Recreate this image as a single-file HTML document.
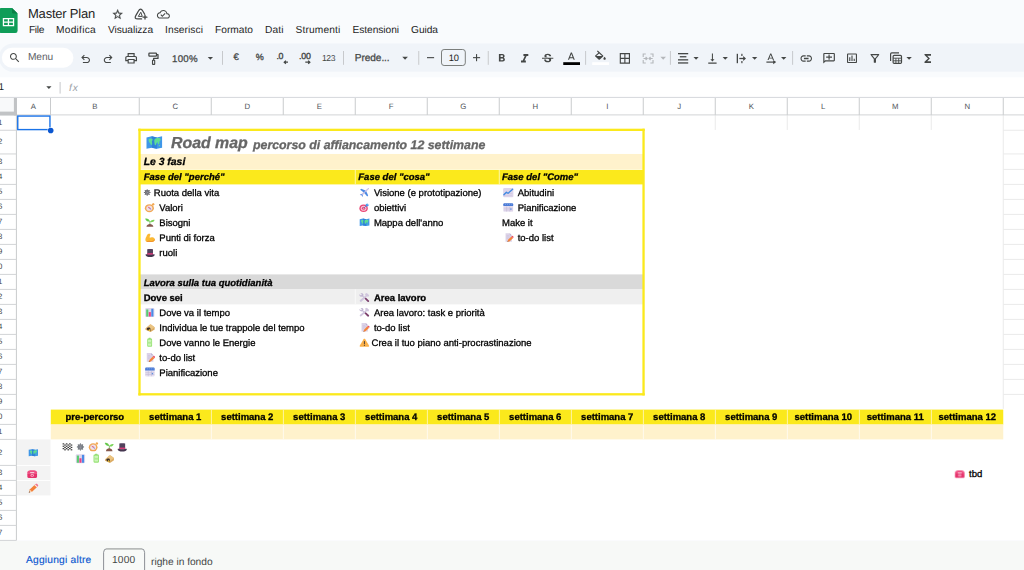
<!DOCTYPE html>
<html lang="it"><head><meta charset="utf-8"><title>Master Plan</title>
<style>
html,body{margin:0;padding:0}
body{width:1024px;height:570px;overflow:hidden;position:relative;background:#f9fbfd;font-family:"Liberation Sans", sans-serif;}
.t{position:absolute;white-space:pre;line-height:1;text-rendering:geometricPrecision;}
.c{-webkit-text-stroke:0.3px currentColor;}
svg{position:absolute;left:0;top:0;overflow:visible}
</style></head><body>
<svg id="grid" width="1024" height="570" viewBox="0 0 1024 570">
<rect x="-1" y="43.4" width="1100" height="28.4" rx="14.2" fill="#f0f4f9"/>
<rect x="1.9" y="47.8" width="71.5" height="19.9" rx="9.95" fill="#ffffff"/>
<rect x="0" y="77.3" width="1024" height="21" fill="#ffffff"/>
<rect x="441.5" y="49.5" width="23.8" height="16" rx="2.6" fill="none" stroke="#747775" stroke-width="0.95"/>
<rect x="0.00" y="98.00" width="1024.00" height="442.40" fill="#ffffff"/>
<rect x="0.00" y="540.80" width="1024.00" height="30.20" fill="#f7f9f7"/>
<rect x="103.6" y="548.7" width="41" height="30" rx="3.6" fill="#f8faf8" stroke="#80858a" stroke-width="0.9"/>
<rect x="106.5" y="548.2" width="35.2" height="1.5" fill="#bdc0be"/>
<rect x="1003.25" y="129.75" width="20.75" height="1.00" fill="#eaeaea"/>
<rect x="1003.25" y="153.45" width="20.75" height="1.00" fill="#eaeaea"/>
<rect x="1003.25" y="168.90" width="20.75" height="1.00" fill="#eaeaea"/>
<rect x="1003.25" y="183.90" width="20.75" height="1.00" fill="#eaeaea"/>
<rect x="1003.25" y="198.90" width="20.75" height="1.00" fill="#eaeaea"/>
<rect x="1003.25" y="213.90" width="20.75" height="1.00" fill="#eaeaea"/>
<rect x="1003.25" y="228.90" width="20.75" height="1.00" fill="#eaeaea"/>
<rect x="1003.25" y="243.90" width="20.75" height="1.00" fill="#eaeaea"/>
<rect x="1003.25" y="258.90" width="20.75" height="1.00" fill="#eaeaea"/>
<rect x="1003.25" y="273.90" width="20.75" height="1.00" fill="#eaeaea"/>
<rect x="1003.25" y="288.90" width="20.75" height="1.00" fill="#eaeaea"/>
<rect x="1003.25" y="303.90" width="20.75" height="1.00" fill="#eaeaea"/>
<rect x="1003.25" y="318.90" width="20.75" height="1.00" fill="#eaeaea"/>
<rect x="1003.25" y="333.90" width="20.75" height="1.00" fill="#eaeaea"/>
<rect x="1003.25" y="348.90" width="20.75" height="1.00" fill="#eaeaea"/>
<rect x="1003.25" y="363.90" width="20.75" height="1.00" fill="#eaeaea"/>
<rect x="1003.25" y="378.90" width="20.75" height="1.00" fill="#eaeaea"/>
<rect x="1003.25" y="393.90" width="20.75" height="1.00" fill="#eaeaea"/>
<rect x="1002.75" y="114.90" width="1.00" height="293.90" fill="#eaeaea"/>
<rect x="714.75" y="114.90" width="1.00" height="15.05" fill="#eaeaea"/>
<rect x="786.75" y="114.90" width="1.00" height="15.05" fill="#eaeaea"/>
<rect x="858.75" y="114.90" width="1.00" height="15.05" fill="#eaeaea"/>
<rect x="930.75" y="114.90" width="1.00" height="15.05" fill="#eaeaea"/>
<rect x="0.00" y="96.90" width="1024.00" height="1.00" fill="#d5d8dc"/>
<rect x="0.00" y="114.40" width="1024.00" height="1.00" fill="#d2d4d6"/>
<rect x="50.00" y="98.00" width="1.00" height="16.90" fill="#c9cbcd"/>
<rect x="138.75" y="98.00" width="1.00" height="16.90" fill="#c9cbcd"/>
<rect x="210.75" y="98.00" width="1.00" height="16.90" fill="#c9cbcd"/>
<rect x="282.75" y="98.00" width="1.00" height="16.90" fill="#c9cbcd"/>
<rect x="354.75" y="98.00" width="1.00" height="16.90" fill="#c9cbcd"/>
<rect x="426.75" y="98.00" width="1.00" height="16.90" fill="#c9cbcd"/>
<rect x="498.75" y="98.00" width="1.00" height="16.90" fill="#c9cbcd"/>
<rect x="570.75" y="98.00" width="1.00" height="16.90" fill="#c9cbcd"/>
<rect x="642.75" y="98.00" width="1.00" height="16.90" fill="#c9cbcd"/>
<rect x="714.75" y="98.00" width="1.00" height="16.90" fill="#c9cbcd"/>
<rect x="786.75" y="98.00" width="1.00" height="16.90" fill="#c9cbcd"/>
<rect x="858.75" y="98.00" width="1.00" height="16.90" fill="#c9cbcd"/>
<rect x="930.75" y="98.00" width="1.00" height="16.90" fill="#c9cbcd"/>
<rect x="1002.75" y="98.00" width="1.00" height="16.90" fill="#c9cbcd"/>
<rect x="15.90" y="98.00" width="1.00" height="442.40" fill="#c9cbcd"/>
<rect x="0.00" y="129.75" width="16.40" height="1.00" fill="#d2d4d6"/>
<rect x="0.00" y="153.45" width="16.40" height="1.00" fill="#d2d4d6"/>
<rect x="0.00" y="168.90" width="16.40" height="1.00" fill="#d2d4d6"/>
<rect x="0.00" y="183.90" width="16.40" height="1.00" fill="#d2d4d6"/>
<rect x="0.00" y="198.90" width="16.40" height="1.00" fill="#d2d4d6"/>
<rect x="0.00" y="213.90" width="16.40" height="1.00" fill="#d2d4d6"/>
<rect x="0.00" y="228.90" width="16.40" height="1.00" fill="#d2d4d6"/>
<rect x="0.00" y="243.90" width="16.40" height="1.00" fill="#d2d4d6"/>
<rect x="0.00" y="258.90" width="16.40" height="1.00" fill="#d2d4d6"/>
<rect x="0.00" y="273.90" width="16.40" height="1.00" fill="#d2d4d6"/>
<rect x="0.00" y="288.90" width="16.40" height="1.00" fill="#d2d4d6"/>
<rect x="0.00" y="303.90" width="16.40" height="1.00" fill="#d2d4d6"/>
<rect x="0.00" y="318.90" width="16.40" height="1.00" fill="#d2d4d6"/>
<rect x="0.00" y="333.90" width="16.40" height="1.00" fill="#d2d4d6"/>
<rect x="0.00" y="348.90" width="16.40" height="1.00" fill="#d2d4d6"/>
<rect x="0.00" y="363.90" width="16.40" height="1.00" fill="#d2d4d6"/>
<rect x="0.00" y="378.90" width="16.40" height="1.00" fill="#d2d4d6"/>
<rect x="0.00" y="393.90" width="16.40" height="1.00" fill="#d2d4d6"/>
<rect x="0.00" y="408.90" width="16.40" height="1.00" fill="#d2d4d6"/>
<rect x="0.00" y="423.90" width="16.40" height="1.00" fill="#d2d4d6"/>
<rect x="0.00" y="438.90" width="16.40" height="1.00" fill="#d2d4d6"/>
<rect x="0.00" y="464.90" width="16.40" height="1.00" fill="#d2d4d6"/>
<rect x="0.00" y="479.90" width="16.40" height="1.00" fill="#d2d4d6"/>
<rect x="0.00" y="494.90" width="16.40" height="1.00" fill="#d2d4d6"/>
<rect x="0.00" y="509.90" width="16.40" height="1.00" fill="#d2d4d6"/>
<rect x="0.00" y="524.90" width="16.40" height="1.00" fill="#d2d4d6"/>
<rect x="0.00" y="539.90" width="16.40" height="1.00" fill="#d2d4d6"/>
<rect x="0.00" y="98.00" width="14.00" height="13.80" fill="#f8f9fa"/>
<rect x="13.90" y="98.00" width="3.00" height="17.40" fill="#c1c3c5"/>
<rect x="0.00" y="111.60" width="16.90" height="3.80" fill="#c1c3c5"/>
<rect x="139.25" y="153.95" width="504.00" height="15.45" fill="#fff2cc"/>
<rect x="139.25" y="169.40" width="504.00" height="15.00" fill="#fbe91c"/>
<rect x="139.25" y="274.40" width="504.00" height="15.00" fill="#d9d9d9"/>
<rect x="139.25" y="289.40" width="504.00" height="15.00" fill="#efefef"/>
<rect x="354.80" y="169.40" width="0.90" height="15.00" fill="#fff8b8"/>
<rect x="498.80" y="169.40" width="0.90" height="15.00" fill="#fff8b8"/>
<rect x="139.25" y="169.05" width="504.00" height="0.90" fill="#fffae0"/>
<rect x="354.80" y="289.40" width="0.90" height="15.00" fill="#fbfbfb"/>
<rect x="138.35" y="128.70" width="506.35" height="2.30" fill="#fbe91c"/>
<rect x="138.35" y="393.15" width="506.35" height="2.30" fill="#fbe91c"/>
<rect x="138.35" y="128.70" width="2.30" height="266.75" fill="#fbe91c"/>
<rect x="642.40" y="128.70" width="2.30" height="266.75" fill="#fbe91c"/>
<rect x="50.80" y="409.60" width="952.45" height="14.80" fill="#fbe91c"/>
<rect x="50.80" y="424.40" width="952.45" height="15.00" fill="#fff2cc"/>
<rect x="138.90" y="409.60" width="0.90" height="14.80" fill="#fef6b4"/>
<rect x="138.90" y="424.40" width="0.90" height="15.00" fill="#fffbf0"/>
<rect x="210.90" y="409.60" width="0.90" height="14.80" fill="#fef6b4"/>
<rect x="210.90" y="424.40" width="0.90" height="15.00" fill="#fffbf0"/>
<rect x="282.90" y="409.60" width="0.90" height="14.80" fill="#fef6b4"/>
<rect x="282.90" y="424.40" width="0.90" height="15.00" fill="#fffbf0"/>
<rect x="354.90" y="409.60" width="0.90" height="14.80" fill="#fef6b4"/>
<rect x="354.90" y="424.40" width="0.90" height="15.00" fill="#fffbf0"/>
<rect x="426.90" y="409.60" width="0.90" height="14.80" fill="#fef6b4"/>
<rect x="426.90" y="424.40" width="0.90" height="15.00" fill="#fffbf0"/>
<rect x="498.90" y="409.60" width="0.90" height="14.80" fill="#fef6b4"/>
<rect x="498.90" y="424.40" width="0.90" height="15.00" fill="#fffbf0"/>
<rect x="570.90" y="409.60" width="0.90" height="14.80" fill="#fef6b4"/>
<rect x="570.90" y="424.40" width="0.90" height="15.00" fill="#fffbf0"/>
<rect x="642.90" y="409.60" width="0.90" height="14.80" fill="#fef6b4"/>
<rect x="642.90" y="424.40" width="0.90" height="15.00" fill="#fffbf0"/>
<rect x="714.90" y="409.60" width="0.90" height="14.80" fill="#fef6b4"/>
<rect x="714.90" y="424.40" width="0.90" height="15.00" fill="#fffbf0"/>
<rect x="786.90" y="409.60" width="0.90" height="14.80" fill="#fef6b4"/>
<rect x="786.90" y="424.40" width="0.90" height="15.00" fill="#fffbf0"/>
<rect x="858.90" y="409.60" width="0.90" height="14.80" fill="#fef6b4"/>
<rect x="858.90" y="424.40" width="0.90" height="15.00" fill="#fffbf0"/>
<rect x="930.90" y="409.60" width="0.90" height="14.80" fill="#fef6b4"/>
<rect x="930.90" y="424.40" width="0.90" height="15.00" fill="#fffbf0"/>
<rect x="50.80" y="424.10" width="952.45" height="0.60" fill="#fdf0a0"/>
<rect x="16.90" y="439.40" width="33.60" height="56.00" fill="#f3f3f3"/>
<rect x="16.90" y="464.95" width="33.60" height="0.90" fill="#ffffff"/>
<rect x="16.90" y="479.95" width="33.60" height="0.90" fill="#ffffff"/>
<rect x="17.75" y="116.05" width="32.20" height="13.55" fill="none" stroke="#1a73e8" stroke-width="1.4"/>
<circle cx="50.70" cy="130.55" r="3.2" fill="#fff"/>
<circle cx="50.70" cy="130.55" r="2.8" fill="#0b57d0"/>
</svg>
<svg id="icons" width="1024" height="570" viewBox="0 0 1024 570">
<defs><filter id="soft" x="-5%" y="-5%" width="110%" height="110%"><feGaussianBlur stdDeviation="0.38"/></filter></defs><g filter="url(#soft)" opacity="0.92">
<g transform="translate(146.50 135.70) scale(0.7800 0.6850)"><path d="M0 2.5 L6.7 0.8 L13.3 2.5 L20 0.8 V17.5 L13.3 19.2 L6.7 17.5 L0 19.2Z" fill="#2f8ee6"/><path d="M6.7 0.8 L13.3 2.5 V19.2 L6.7 17.5Z" fill="#1f78d4"/><path d="M2.5 5.5 q2-2 4.5-1 q1.5 0.5 0.5 2.5 q-1 1.5 -0.5 3 q0.8 2 -0.5 4 q-1.5-0.5 -1.8-3 q-2-1.5 -2.2-5.5z" fill="#4fdc8c"/><path d="M10 6 q1.5-3 4.5-2.5 q3-0.5 3.5 1.5 q0.5 2.5 -1.5 4 q0.5 3 -1 4 q-1-1 -1-3.5 q-1.5 0 -2 2.5 q-0.5 2.5 -1.8 1.5 q-1-3.5 -0.7-7.5z" fill="#4fdc8c"/><circle cx="16.5" cy="14.5" r="1" fill="#4fdc8c"/></g>
<g transform="translate(143.90 189.30) scale(0.3300 0.3200)"><circle cx="10" cy="10" r="7.6" fill="#4a4a50"/><circle cx="10" cy="10" r="4.6" fill="none" stroke="#9a9aa6" stroke-width="1.6"/><circle cx="10" cy="10" r="1.6" fill="#b8b8c2"/><circle cx="18.60" cy="10.00" r="1.7" fill="#4a4a50"/><line x1="12.00" y1="10.00" x2="16.00" y2="10.00" stroke="#8a8a96" stroke-width="0.9"/><circle cx="16.08" cy="16.08" r="1.7" fill="#4a4a50"/><line x1="11.41" y1="11.41" x2="14.24" y2="14.24" stroke="#8a8a96" stroke-width="0.9"/><circle cx="10.00" cy="18.60" r="1.7" fill="#4a4a50"/><line x1="10.00" y1="12.00" x2="10.00" y2="16.00" stroke="#8a8a96" stroke-width="0.9"/><circle cx="3.92" cy="16.08" r="1.7" fill="#4a4a50"/><line x1="8.59" y1="11.41" x2="5.76" y2="14.24" stroke="#8a8a96" stroke-width="0.9"/><circle cx="1.40" cy="10.00" r="1.7" fill="#4a4a50"/><line x1="8.00" y1="10.00" x2="4.00" y2="10.00" stroke="#8a8a96" stroke-width="0.9"/><circle cx="3.92" cy="3.92" r="1.7" fill="#4a4a50"/><line x1="8.59" y1="8.59" x2="5.76" y2="5.76" stroke="#8a8a96" stroke-width="0.9"/><circle cx="10.00" cy="1.40" r="1.7" fill="#4a4a50"/><line x1="10.00" y1="8.00" x2="10.00" y2="4.00" stroke="#8a8a96" stroke-width="0.9"/><circle cx="16.08" cy="3.92" r="1.7" fill="#4a4a50"/><line x1="11.41" y1="8.59" x2="14.24" y2="5.76" stroke="#8a8a96" stroke-width="0.9"/></g>
<g transform="translate(144.50 203.00) scale(0.5250 0.4700)"><circle cx="9.3" cy="11" r="8.6" fill="#f0a044"/><circle cx="9.3" cy="11" r="5.7" fill="#eedfe6"/><rect x="14.3" y="0.6" width="4.6" height="4.6" rx="1.6" transform="rotate(40 16.6 2.9)" fill="#f0a044"/><path d="M5.3 7 L11 10 L9 12Z" fill="#e24a6a"/><path d="M13.3 15 L11 10 L9 12Z" fill="#8a6ab0"/></g>
<g transform="translate(144.90 217.90) scale(0.5000 0.4600)"><path d="M10 8 C9 3 4 0.5 0.5 2 C2 7 6 8.5 10 8Z" fill="#58c43c"/><path d="M10.5 9 C12 5 16 3.5 19.5 4.5 C18 9 14 10 10.5 9Z" fill="#6ed048"/><path d="M9.3 7 h1.6 v8 h-1.6z" fill="#4aa834"/><path d="M3 19.5 C3.5 14.5 7 13 10 13 C13 13 16.5 14.5 17 19.5Z" fill="#7b4a3c"/></g>
<g transform="translate(144.90 233.30) scale(0.5150 0.4450)"><path d="M3 19 C0 17 0.5 11 3 7 C4 4 5 1.5 7.5 1 C10 0.5 11.5 2 10.5 4.5 C9.5 6 9 8 9.5 10 C12 8 17 8.5 19 12 C20.5 16 17 19.5 12 19.5 C8 19.8 5 20 3 19Z" fill="#fbb321"/><path d="M3 19 C5 20 8 19.8 12 19.5 C17 19.5 20.5 16 19 12 C18.5 16 14 17.5 9 17 C6 17 4 17.5 3 19Z" fill="#f08a1c"/></g>
<g transform="translate(145.30 248.70) scale(0.4800 0.4250)"><path d="M4 1.5 C8 0.3 12 0.3 16 1.5 V14 H4Z" fill="#43304f"/><path d="M4 10.5 H16 V14.5 H4Z" fill="#d62a6c"/><path d="M0.5 14 C0.5 13 2 12.8 4 13.5 C8 14.8 12 14.8 16 13.5 C18 12.8 19.5 13 19.5 14 C19.5 17.5 15 19.5 10 19.5 C5 19.5 0.5 17.5 0.5 14Z" fill="#352540"/></g>
<g transform="translate(359.70 187.60) scale(0.4850 0.4650)"><path d="M17.5 1 C19 0.5 19.8 1.5 19 3 L6.5 16 C5 17.5 2.5 18 2 17.5 C1.5 17 2.5 14.5 4 13Z" fill="#cbbde2"/><path d="M12 6.5 L3 2.5 L1 4.5 L8.5 10.5Z" fill="#3b7fe2"/><path d="M13.5 8 L17.5 17 L15.5 19 L9.5 11.5Z" fill="#3b7fe2"/><path d="M5 14 L1 13.5 L0.3 14.5 L3.5 16Z" fill="#3b7fe2"/><path d="M6 15 L6.5 19 L5.5 19.7 L4 16.5Z" fill="#3b7fe2"/></g>
<g transform="translate(359.30 203.00) scale(0.5050 0.4600)"><circle cx="8.5" cy="11.5" r="8.3" fill="#e8366a"/><circle cx="8.5" cy="11.5" r="5.6" fill="#f7c6d6"/><circle cx="8.5" cy="11.5" r="3.4" fill="#e8366a"/><circle cx="8.5" cy="11.5" r="1.3" fill="#f7c6d6"/><path d="M8.5 11.5 L14 6" stroke="#2d6cc8" stroke-width="1.6"/><path d="M13 7 L12.5 3.5 L16 0.3 L16.8 3.2 L19.7 4 L16.5 7.5Z" fill="#3a93ec"/></g>
<g transform="translate(359.70 218.30) scale(0.4850 0.4050)"><path d="M0 2.5 L6.7 0.8 L13.3 2.5 L20 0.8 V17.5 L13.3 19.2 L6.7 17.5 L0 19.2Z" fill="#2f8ee6"/><path d="M6.7 0.8 L13.3 2.5 V19.2 L6.7 17.5Z" fill="#1f78d4"/><path d="M2.5 5.5 q2-2 4.5-1 q1.5 0.5 0.5 2.5 q-1 1.5 -0.5 3 q0.8 2 -0.5 4 q-1.5-0.5 -1.8-3 q-2-1.5 -2.2-5.5z" fill="#4fdc8c"/><path d="M10 6 q1.5-3 4.5-2.5 q3-0.5 3.5 1.5 q0.5 2.5 -1.5 4 q0.5 3 -1 4 q-1-1 -1-3.5 q-1.5 0 -2 2.5 q-0.5 2.5 -1.8 1.5 q-1-3.5 -0.7-7.5z" fill="#4fdc8c"/><circle cx="16.5" cy="14.5" r="1" fill="#4fdc8c"/></g>
<g transform="translate(503.10 188.10) scale(0.5150 0.4600)"><rect x="0" y="0" width="20" height="20" rx="2.5" fill="#dcd3ea"/><path d="M2 16.5 H18 M2 12 H18" stroke="#c4b8d8" stroke-width="1"/><path d="M1.5 14.5 L6.5 9 L9.5 11.5 L18.5 2.5" fill="none" stroke="#2f7fe0" stroke-width="2.6" stroke-linejoin="round" stroke-linecap="round"/></g>
<g transform="translate(503.10 202.70) scale(0.5150 0.4700)"><rect x="0.5" y="1" width="19" height="18.5" rx="2.5" fill="#e2dbee"/><path d="M0.5 7 V3.5 C0.5 2 1.5 1 3 1 H17 C18.5 1 19.5 2 19.5 3.5 V7Z" fill="#3b71d4"/><path d="M4 3.5 h1.5 M8 3.5 h1.5 M12 3.5 h1.5 M16 3.5 h1" stroke="#9db8ee" stroke-width="1.4"/><path d="M6.8 8 V19 M13.2 8 V19 M1 11.7 H19 M1 15.4 H19" stroke="#b9aed0" stroke-width="1"/><rect x="13.8" y="12.2" width="2.6" height="2.8" fill="#4f86e0"/></g>
<g transform="translate(504.90 233.00) scale(0.4250 0.4450)"><path d="M1.5 0.5 H11.5 L16.5 5.5 V19.5 H1.5Z" fill="#d9d0e6"/><path d="M11.5 0.5 L16.5 5.5 H11.5Z" fill="#b9aacd"/><path d="M4 6 H9.5 M4 9 H12.5 M4 12 H8.5" stroke="#c3b6d6" stroke-width="1.1"/><path d="M6 19.9 L7.4 15.4 L15.2 8 L18.9 11.6 L10.8 19Z" fill="#f47a2c"/><path d="M15.2 8 L16.7 6.7 Q18.4 5.8 19.6 7.3 Q20.7 8.8 19.9 10.4 L18.9 11.6Z" fill="#e8405a"/><path d="M6 19.9 L6.7 17.6 L8.4 19.2Z" fill="#5a3a2a"/></g>
<g transform="translate(145.20 308.10) scale(0.4600 0.4450)"><rect x="0" y="0" width="20" height="20" rx="2.5" fill="#dcd3ea"/><rect x="2.2" y="3" width="4.6" height="16" fill="#4bc865"/><rect x="7.7" y="9" width="4.6" height="10" fill="#e8337a"/><rect x="13.2" y="1.5" width="4.6" height="17.5" fill="#3a82e6"/></g>
<g transform="translate(145.20 324.10) scale(0.4850 0.4100)"><path d="M0.5 11 L9 2 C10 1 11.5 0.8 12.5 1.5 L19.5 7.5 V13 L11 19.5 L0.5 14Z" fill="#d9a556"/><path d="M0.5 11 L9 2 C10 1 11.5 0.8 12.5 1.5 L19.5 7.5 L11 14.5Z" fill="#e9bf78"/><path d="M3 11.5 C4 8 8 7.5 10.5 9.5 L11 17.5 L5 15Z" fill="#2a1c14"/><path d="M6 16 L8.5 11.5 L11 17.5Z" fill="#f7c628"/></g>
<g transform="translate(146.40 337.70) scale(0.3250 0.4600)"><rect x="6.5" y="0" width="7" height="3" rx="1" fill="#8fd36f"/><rect x="2.5" y="1.8" width="15" height="18" rx="2.5" fill="#8ee06a"/><rect x="5" y="4.3" width="10" height="13" rx="1.2" fill="#c9f5b4"/><rect x="5" y="9" width="10" height="4" fill="#a6ea88"/></g>
<g transform="translate(146.10 352.80) scale(0.4400 0.4600)"><path d="M1.5 0.5 H11.5 L16.5 5.5 V19.5 H1.5Z" fill="#d9d0e6"/><path d="M11.5 0.5 L16.5 5.5 H11.5Z" fill="#b9aacd"/><path d="M4 6 H9.5 M4 9 H12.5 M4 12 H8.5" stroke="#c3b6d6" stroke-width="1.1"/><path d="M6 19.9 L7.4 15.4 L15.2 8 L18.9 11.6 L10.8 19Z" fill="#f47a2c"/><path d="M15.2 8 L16.7 6.7 Q18.4 5.8 19.6 7.3 Q20.7 8.8 19.9 10.4 L18.9 11.6Z" fill="#e8405a"/><path d="M6 19.9 L6.7 17.6 L8.4 19.2Z" fill="#5a3a2a"/></g>
<g transform="translate(144.90 367.10) scale(0.5000 0.4800)"><rect x="0.5" y="1" width="19" height="18.5" rx="2.5" fill="#e2dbee"/><path d="M0.5 7 V3.5 C0.5 2 1.5 1 3 1 H17 C18.5 1 19.5 2 19.5 3.5 V7Z" fill="#3b71d4"/><path d="M4 3.5 h1.5 M8 3.5 h1.5 M12 3.5 h1.5 M16 3.5 h1" stroke="#9db8ee" stroke-width="1.4"/><path d="M6.8 8 V19 M13.2 8 V19 M1 11.7 H19 M1 15.4 H19" stroke="#b9aed0" stroke-width="1"/><rect x="13.8" y="12.2" width="2.6" height="2.8" fill="#4f86e0"/></g>
<g transform="translate(359.10 292.90) scale(0.5150 0.4600)"><path d="M2.5 1 C5 0 8 1 8.5 3.5 C8.8 5 8.3 6 7.8 6.8 L18.8 16.3 C19.8 17.3 19.6 18.6 18.8 19.2 C18 19.8 16.8 19.7 16 18.8 L6.3 8 C4.5 8.8 2 8.2 1 6 C0.5 5 0.5 4 0.8 3.2 L3.5 5.5 L5.5 3.8Z" fill="#bdb0cf"/><path d="M10 11.5 L12.5 9.3 L18.8 16.3 C19.8 17.3 19.6 18.6 18.8 19.2 C18 19.8 16.8 19.7 16 18.8Z" fill="#73305f"/><path d="M11 2.5 L15 0.3 L19.7 5 L17.5 8.8 L15.5 7.2 L5 18.5 C4 19.5 2.6 19.5 1.8 18.7 C1 17.9 1 16.5 2 15.6 L13 5Z" fill="#cdc2dc"/></g>
<g transform="translate(359.10 307.60) scale(0.5150 0.4600)"><path d="M2.5 1 C5 0 8 1 8.5 3.5 C8.8 5 8.3 6 7.8 6.8 L18.8 16.3 C19.8 17.3 19.6 18.6 18.8 19.2 C18 19.8 16.8 19.7 16 18.8 L6.3 8 C4.5 8.8 2 8.2 1 6 C0.5 5 0.5 4 0.8 3.2 L3.5 5.5 L5.5 3.8Z" fill="#bdb0cf"/><path d="M10 11.5 L12.5 9.3 L18.8 16.3 C19.8 17.3 19.6 18.6 18.8 19.2 C18 19.8 16.8 19.7 16 18.8Z" fill="#73305f"/><path d="M11 2.5 L15 0.3 L19.7 5 L17.5 8.8 L15.5 7.2 L5 18.5 C4 19.5 2.6 19.5 1.8 18.7 C1 17.9 1 16.5 2 15.6 L13 5Z" fill="#cdc2dc"/></g>
<g transform="translate(360.90 322.80) scale(0.4250 0.4450)"><path d="M1.5 0.5 H11.5 L16.5 5.5 V19.5 H1.5Z" fill="#d9d0e6"/><path d="M11.5 0.5 L16.5 5.5 H11.5Z" fill="#b9aacd"/><path d="M4 6 H9.5 M4 9 H12.5 M4 12 H8.5" stroke="#c3b6d6" stroke-width="1.1"/><path d="M6 19.9 L7.4 15.4 L15.2 8 L18.9 11.6 L10.8 19Z" fill="#f47a2c"/><path d="M15.2 8 L16.7 6.7 Q18.4 5.8 19.6 7.3 Q20.7 8.8 19.9 10.4 L18.9 11.6Z" fill="#e8405a"/><path d="M6 19.9 L6.7 17.6 L8.4 19.2Z" fill="#5a3a2a"/></g>
<g transform="translate(359.60 338.30) scale(0.4800 0.4350)"><path d="M10 1 C10.8 1 11.4 1.4 11.8 2.1 L19.6 16.3 C20.4 17.8 19.4 19.5 17.8 19.5 H2.2 C0.6 19.5 -0.4 17.8 0.4 16.3 L8.2 2.1 C8.6 1.4 9.2 1 10 1Z" fill="#fbab3a"/><rect x="9" y="6" width="2" height="8" rx="1" fill="#3a2a22"/><circle cx="10" cy="16.5" r="1.2" fill="#3a2a22"/></g>
<g transform="translate(28.70 448.90) scale(0.4650 0.3850)"><path d="M0 2.5 L6.7 0.8 L13.3 2.5 L20 0.8 V17.5 L13.3 19.2 L6.7 17.5 L0 19.2Z" fill="#2f8ee6"/><path d="M6.7 0.8 L13.3 2.5 V19.2 L6.7 17.5Z" fill="#1f78d4"/><path d="M2.5 5.5 q2-2 4.5-1 q1.5 0.5 0.5 2.5 q-1 1.5 -0.5 3 q0.8 2 -0.5 4 q-1.5-0.5 -1.8-3 q-2-1.5 -2.2-5.5z" fill="#4fdc8c"/><path d="M10 6 q1.5-3 4.5-2.5 q3-0.5 3.5 1.5 q0.5 2.5 -1.5 4 q0.5 3 -1 4 q-1-1 -1-3.5 q-1.5 0 -2 2.5 q-0.5 2.5 -1.8 1.5 q-1-3.5 -0.7-7.5z" fill="#4fdc8c"/><circle cx="16.5" cy="14.5" r="1" fill="#4fdc8c"/></g>
<g transform="translate(27.10 469.90) scale(0.5100 0.4100)"><path d="M3 8 H17 C18.5 8 19.5 9 19.5 10.5 V17 C19.5 18.5 18.5 19.5 17 19.5 H3 C1.5 19.5 0.5 18.5 0.5 17 V10.5 C0.5 9 1.5 8 3 8Z" fill="#e3215f"/><path d="M0.3 6.5 C0.3 2.5 4 1 10 1 C16 1 19.7 2.5 19.7 6.5 V8 C19.7 8.8 19 9.3 18.2 9.3 H15.5 C14.7 9.3 14 8.8 14 8 V6 H6 V8 C6 8.8 5.3 9.3 4.5 9.3 H1.8 C1 9.3 0.3 8.8 0.3 8Z" fill="#ef3f78"/><circle cx="10" cy="13.5" r="3.4" fill="#f8a8c2"/><circle cx="10" cy="13.5" r="1.5" fill="#e3215f"/></g>
<g transform="translate(28.30 483.70) scale(0.5000 0.4650)"><path d="M1 19 L2.8 12.5 L13 2.3 L17.7 7 L7.5 17.2Z" fill="#f3762a"/><path d="M13 2.3 L14.6 0.8 C15.6 -0.1 17 -0.1 18 0.9 L19.1 2 C20.1 3 20.1 4.4 19.2 5.4 L17.7 7Z" fill="#f06a88"/><path d="M12.2 3.1 L13.8 1.6 L18.4 6.2 L16.9 7.8Z" fill="#fce9e0"/><path d="M1 19 L2.8 12.5 L7.5 17.2Z" fill="#fad0a8"/><path d="M1 19 L1.8 16.2 L3.8 18.2Z" fill="#3a2a22"/></g>
<g transform="translate(62.60 443.30) scale(0.4850 0.3550)"><rect x="0" y="0" width="20" height="20" fill="#fff"/><rect x="0.00" y="0.00" width="3.33" height="3.33" fill="#2a2a2a"/><rect x="0.00" y="6.67" width="3.33" height="3.33" fill="#2a2a2a"/><rect x="0.00" y="13.33" width="3.33" height="3.33" fill="#2a2a2a"/><rect x="3.33" y="3.33" width="3.33" height="3.33" fill="#2a2a2a"/><rect x="3.33" y="10.00" width="3.33" height="3.33" fill="#2a2a2a"/><rect x="3.33" y="16.67" width="3.33" height="3.33" fill="#2a2a2a"/><rect x="6.67" y="0.00" width="3.33" height="3.33" fill="#2a2a2a"/><rect x="6.67" y="6.67" width="3.33" height="3.33" fill="#2a2a2a"/><rect x="6.67" y="13.33" width="3.33" height="3.33" fill="#2a2a2a"/><rect x="10.00" y="3.33" width="3.33" height="3.33" fill="#2a2a2a"/><rect x="10.00" y="10.00" width="3.33" height="3.33" fill="#2a2a2a"/><rect x="10.00" y="16.67" width="3.33" height="3.33" fill="#2a2a2a"/><rect x="13.33" y="0.00" width="3.33" height="3.33" fill="#2a2a2a"/><rect x="13.33" y="6.67" width="3.33" height="3.33" fill="#2a2a2a"/><rect x="13.33" y="13.33" width="3.33" height="3.33" fill="#2a2a2a"/><rect x="16.67" y="3.33" width="3.33" height="3.33" fill="#2a2a2a"/><rect x="16.67" y="10.00" width="3.33" height="3.33" fill="#2a2a2a"/><rect x="16.67" y="16.67" width="3.33" height="3.33" fill="#2a2a2a"/></g>
<g transform="translate(76.90 443.40) scale(0.3550 0.3550)"><circle cx="10" cy="10" r="7.6" fill="#5a6068"/><circle cx="10" cy="10" r="4.6" fill="none" stroke="#9a9aa6" stroke-width="1.6"/><circle cx="10" cy="10" r="1.6" fill="#b8b8c2"/><circle cx="18.60" cy="10.00" r="1.7" fill="#5a6068"/><line x1="12.00" y1="10.00" x2="16.00" y2="10.00" stroke="#8a8a96" stroke-width="0.9"/><circle cx="16.08" cy="16.08" r="1.7" fill="#5a6068"/><line x1="11.41" y1="11.41" x2="14.24" y2="14.24" stroke="#8a8a96" stroke-width="0.9"/><circle cx="10.00" cy="18.60" r="1.7" fill="#5a6068"/><line x1="10.00" y1="12.00" x2="10.00" y2="16.00" stroke="#8a8a96" stroke-width="0.9"/><circle cx="3.92" cy="16.08" r="1.7" fill="#5a6068"/><line x1="8.59" y1="11.41" x2="5.76" y2="14.24" stroke="#8a8a96" stroke-width="0.9"/><circle cx="1.40" cy="10.00" r="1.7" fill="#5a6068"/><line x1="8.00" y1="10.00" x2="4.00" y2="10.00" stroke="#8a8a96" stroke-width="0.9"/><circle cx="3.92" cy="3.92" r="1.7" fill="#5a6068"/><line x1="8.59" y1="8.59" x2="5.76" y2="5.76" stroke="#8a8a96" stroke-width="0.9"/><circle cx="10.00" cy="1.40" r="1.7" fill="#5a6068"/><line x1="10.00" y1="8.00" x2="10.00" y2="4.00" stroke="#8a8a96" stroke-width="0.9"/><circle cx="16.08" cy="3.92" r="1.7" fill="#5a6068"/><line x1="11.41" y1="8.59" x2="14.24" y2="5.76" stroke="#8a8a96" stroke-width="0.9"/></g>
<g transform="translate(88.40 442.10) scale(0.5100 0.4700)"><circle cx="9.3" cy="11" r="8.6" fill="#f0a044"/><circle cx="9.3" cy="11" r="5.7" fill="#eedfe6"/><rect x="14.3" y="0.6" width="4.6" height="4.6" rx="1.6" transform="rotate(40 16.6 2.9)" fill="#f0a044"/><path d="M5.3 7 L11 10 L9 12Z" fill="#e24a6a"/><path d="M13.3 15 L11 10 L9 12Z" fill="#8a6ab0"/></g>
<g transform="translate(104.50 442.10) scale(0.4700 0.4700)"><path d="M10 8 C9 3 4 0.5 0.5 2 C2 7 6 8.5 10 8Z" fill="#58c43c"/><path d="M10.5 9 C12 5 16 3.5 19.5 4.5 C18 9 14 10 10.5 9Z" fill="#6ed048"/><path d="M9.3 7 h1.6 v8 h-1.6z" fill="#4aa834"/><path d="M3 19.5 C3.5 14.5 7 13 10 13 C13 13 16.5 14.5 17 19.5Z" fill="#7b4a3c"/></g>
<g transform="translate(117.40 442.90) scale(0.4850 0.4450)"><path d="M4 1.5 C8 0.3 12 0.3 16 1.5 V14 H4Z" fill="#43304f"/><path d="M4 10.5 H16 V14.5 H4Z" fill="#d62a6c"/><path d="M0.5 14 C0.5 13 2 12.8 4 13.5 C8 14.8 12 14.8 16 13.5 C18 12.8 19.5 13 19.5 14 C19.5 17.5 15 19.5 10 19.5 C5 19.5 0.5 17.5 0.5 14Z" fill="#352540"/></g>
<g transform="translate(75.80 454.20) scale(0.4650 0.4500)"><rect x="0" y="0" width="20" height="20" rx="2.5" fill="#dcd3ea"/><rect x="2.2" y="3" width="4.6" height="16" fill="#4bc865"/><rect x="7.7" y="9" width="4.6" height="10" fill="#e8337a"/><rect x="13.2" y="1.5" width="4.6" height="17.5" fill="#3a82e6"/></g>
<g transform="translate(92.60 453.80) scale(0.3650 0.4500)"><rect x="6.5" y="0" width="7" height="3" rx="1" fill="#8fd36f"/><rect x="2.5" y="1.8" width="15" height="18" rx="2.5" fill="#8ee06a"/><rect x="5" y="4.3" width="10" height="13" rx="1.2" fill="#c9f5b4"/><rect x="5" y="9" width="10" height="4" fill="#a6ea88"/></g>
<g transform="translate(104.80 455.00) scale(0.4700 0.4100)"><path d="M0.5 11 L9 2 C10 1 11.5 0.8 12.5 1.5 L19.5 7.5 V13 L11 19.5 L0.5 14Z" fill="#d9a556"/><path d="M0.5 11 L9 2 C10 1 11.5 0.8 12.5 1.5 L19.5 7.5 L11 14.5Z" fill="#e9bf78"/><path d="M3 11.5 C4 8 8 7.5 10.5 9.5 L11 17.5 L5 15Z" fill="#2a1c14"/><path d="M6 16 L8.5 11.5 L11 17.5Z" fill="#f7c628"/></g>
<g transform="translate(954.80 470.00) scale(0.4950 0.4000)"><path d="M3 8 H17 C18.5 8 19.5 9 19.5 10.5 V17 C19.5 18.5 18.5 19.5 17 19.5 H3 C1.5 19.5 0.5 18.5 0.5 17 V10.5 C0.5 9 1.5 8 3 8Z" fill="#e3215f"/><path d="M0.3 6.5 C0.3 2.5 4 1 10 1 C16 1 19.7 2.5 19.7 6.5 V8 C19.7 8.8 19 9.3 18.2 9.3 H15.5 C14.7 9.3 14 8.8 14 8 V6 H6 V8 C6 8.8 5.3 9.3 4.5 9.3 H1.8 C1 9.3 0.3 8.8 0.3 8Z" fill="#ef3f78"/><circle cx="10" cy="13.5" r="3.4" fill="#f8a8c2"/><circle cx="10" cy="13.5" r="1.5" fill="#e3215f"/></g>
</g>
<g transform="translate(8.42 51.42) scale(0.5257)"><path d="M15.5 14h-.79l-.28-.27C15.41 12.59 16 11.11 16 9.5 16 5.91 13.09 3 9.5 3S3 5.91 3 9.5 5.91 16 9.5 16c1.61 0 3.09-.59 4.23-1.57l.27.28v.79l5 4.99L20.49 19l-4.99-5zm-6 0C7.01 14 5 11.99 5 9.5S7.01 5 9.5 5 14 7.01 14 9.5 11.99 14 9.5 14z" fill="#444746"/></g>
<g transform="translate(79.06 52.64) scale(0.5469)"><path d="M7 19v-2h7.1q1.575 0 2.738-1T18 13.5 16.838 11 14.1 10H7.8l2.6 2.6L9 14 4 9l5-5 1.4 1.4L7.8 8h6.3q2.425 0 4.163 1.575T20 13.5t-1.737 3.925T14.1 19z" fill="#444746"/></g>
<g transform="translate(101.56 52.64) scale(0.5469)"><path d="M9.9 19q-2.425 0-4.163-1.575T4 13.5t1.737-3.925T9.9 8h6.3l-2.6-2.6L15 4l5 5-5 5-1.4-1.4 2.6-2.6H9.9q-1.575 0-2.738 1T6 13.5 7.163 16 9.9 17H17v2z" fill="#444746"/></g>
<g transform="translate(124.06 51.23) scale(0.5889)"><path d="M19 8h-1V3H6v5H5c-1.66 0-3 1.34-3 3v6h4v4h12v-4h4v-6c0-1.66-1.34-3-3-3zM8 5h8v3H8V5zm8 14H8v-4h8v4zm4-4h-2v-2H6v2H4v-4c0-.55.45-1 1-1h14c.55 0 1 .45 1 1v4z" fill="#444746"/></g>
<g fill="none" stroke="#444746" stroke-width="1.25" stroke-linejoin="round"><rect x="148.9" y="53.1" width="7.6" height="3.1" rx="0.6"/><path d="M156.5 54.6 H158 V58.4 H153.6 V60.2"/><rect x="152.5" y="60.2" width="2.2" height="4.2" rx="0.4" stroke-width="1.1"/></g>
<path d="M207.75 56.92 H213.00 L210.38 59.68Z" fill="#444746"/>
<path d="M402.25 56.82 H407.90 L405.07 59.78Z" fill="#444746"/>
<path d="M660.40 56.83 H666.00 L663.20 59.77Z" fill="#b4b7bb"/>
<path d="M693.50 56.96 H698.60 L696.05 59.64Z" fill="#444746"/>
<path d="M722.60 56.91 H727.90 L725.25 59.69Z" fill="#444746"/>
<path d="M752.00 56.91 H757.30 L754.65 59.69Z" fill="#444746"/>
<path d="M781.00 56.88 H786.40 L783.70 59.72Z" fill="#444746"/>
<path d="M906.40 56.88 H911.80 L909.10 59.72Z" fill="#444746"/>
<path d="M46.30 86.23 H51.50 L48.90 88.96Z" fill="#444746"/>
<rect x="222.00" y="51" width="1" height="13.8" fill="#c7c9cc"/>
<rect x="343.00" y="51" width="1" height="13.8" fill="#c7c9cc"/>
<rect x="418.25" y="51" width="1" height="13.8" fill="#c7c9cc"/>
<rect x="487.75" y="51" width="1" height="13.8" fill="#c7c9cc"/>
<rect x="585.10" y="51" width="1" height="13.8" fill="#c7c9cc"/>
<rect x="669.90" y="51" width="1" height="13.8" fill="#c7c9cc"/>
<rect x="792.10" y="51" width="1" height="13.8" fill="#c7c9cc"/>
<rect x="59.6" y="82" width="1" height="11.6" fill="#c7c9cc"/>
<path d="M288 62.2 H284.4 M285.9 60.6 L284.2 62.2 L285.9 63.8" stroke="#444746" stroke-width="1.2" fill="none"/>
<path d="M305.3 62.2 H309.6 M308.2 60.6 L309.9 62.2 L308.2 63.8" stroke="#444746" stroke-width="1.2" fill="none"/>
<rect x="427" y="57.1" width="7.1" height="1.1" fill="#444746"/>
<rect x="473" y="57.1" width="7.1" height="1.1" fill="#444746"/><rect x="476" y="54.1" width="1.1" height="7.1" fill="#444746"/>
<g transform="translate(494.99 51.86) scale(0.5581 0.5357)"><path d="M15.6 10.79c.97-.67 1.65-1.77 1.65-2.79 0-2.26-1.75-4-4-4H7v14h7.04c2.09 0 3.71-1.7 3.71-3.79 0-1.52-.86-2.82-2.15-3.42zM10 6.5h3c.83 0 1.5.67 1.5 1.5s-.67 1.5-1.5 1.5h-3v-3zm3.500 9H10v-3h3.500c.83 0 1.500.67 1.500 1.500s-.67 1.500-1.500 1.500z" fill="#444746"/></g>
<g transform="translate(517.35 51.73) scale(0.6083 0.5929)"><path d="M10 4v3h2.21l-3.42 8H6v3h8v-3h-2.21l3.42-8H18V4z" fill="#444746"/></g>
<g transform="translate(540.12 52.05) scale(0.6278 0.5675)"><path d="M6.85 7.08C6.85 4.37 9.45 3 12.24 3c1.64 0 3 .49 3.9 1.28.77.65 1.46 1.73 1.46 3.24h-3.01c0-.31-.05-.59-.15-.85-.29-.86-1.2-1.28-2.25-1.28-1.86 0-2.34 1.02-2.34 1.7 0 .48.25.88.74 1.21.38.25.77.48 1.41.7H7.39c-.21-.34-.54-.89-.54-1.92zM21 12v-2H3v2h9.620c1.150.45 1.960.75 1.960 1.970 0 1-.81 1.670-2.280 1.670-1.540 0-2.930-.54-2.930-2.510H6.400c0 .55.080 1.130.240 1.580.81 2.290 3.290 3.300 5.670 3.300 2.270 0 5.300-.89 5.300-4.050 0-.30-.010-1.160-.480-1.940H21V12z" fill="#444746"/></g>
<g transform="translate(564.98 51.46) scale(0.5308 0.5214)"><path d="M11 2 5.5 16h2.25l1.120-3h6.250l1.120 3h2.250L13 2h-2zm-1.380 9L12 4.670 14.380 11H9.620z" fill="#444746"/></g>
<rect x="563.25" y="62.2" width="16.75" height="2.8" fill="#000"/>
<g transform="translate(593.20 50.60) scale(0.6000 0.5412)"><path d="M16.56 8.94 7.62 0 6.21 1.41l2.380 2.380-5.150 5.150c-.59.59-.59 1.540 0 2.120l5.500 5.500c.29.29.68.44 1.060.44s.77-.15 1.060-.44l5.500-5.500c.59-.58.59-1.530 0-2.120zM5.210 10 10 5.210 14.790 10H5.210zM19 11.500s-2 2.170-2 3.500c0 1.100.9 2 2 2s2-.9 2-2c0-1.330-2-3.500-2-3.500z" fill="#444746"/></g>
<rect x="592.25" y="62.2" width="16.75" height="2.8" fill="#fff"/>
<g transform="translate(618.04 51.21) scale(0.5694 0.5972)"><path d="M3 3v18h18V3H3zm8 16H5v-6h6v6zm0-8H5V5h6v6zm8 8h-6v-6h6v6zm0-8h-6V5h6v6z" fill="#444746"/></g>
<g fill="none" stroke="#b4b7bb" stroke-width="1.1"><path d="M645.8 54 H643.2 V57 M643.2 60 V63 H645.8 M650.4 54 H653 V57 M653 60 V63 H650.4"/><path d="M643.5 58.5 H647 M645.6 57 L647.2 58.5 L645.6 60 M652.7 58.5 H649.2 M650.6 57 L649 58.5 L650.6 60"/></g>
<g fill="#444746"><rect x="678" y="53" width="10.2" height="1.3"/><rect x="679.8" y="56.1" width="6.6" height="1.3"/><rect x="678" y="59.2" width="10.2" height="1.3"/><rect x="678" y="62.3" width="10.2" height="1.3"/></g>
<g transform="translate(706.16 51.79) scale(0.5219 0.5694)"><path d="M16 13h-3V3h-2v10H8l4 4 4-4zM4 19v2h16v-2H4z" fill="#444746"/></g>
<g fill="#444746"><rect x="736.7" y="53.8" width="1.3" height="9.4"/><rect x="741.3" y="53.8" width="1.2" height="2.2"/><rect x="741.3" y="61" width="1.2" height="2.2"/><rect x="739.3" y="57.85" width="5.3" height="1.3"/><path d="M743.2 55.9 L746 58.5 L743.2 61.1Z"/></g>
<g transform="translate(764.75 52.57) scale(0.5000 0.4643)"><path d="M11 2 5.5 16h2.25l1.120-3h6.250l1.120 3h2.250L13 2h-2zm-1.380 9L12 4.670 14.380 11H9.620z" fill="#444746"/></g>
<g fill="#444746"><rect x="766.4" y="61.5" width="8" height="1.2"/><path d="M773.2 59.9 L776.2 62.1 L773.2 64.3Z"/></g>
<g transform="translate(799.35 50.58) scale(0.5750 0.6600)"><path d="M3.9 12c0-1.710 1.390-3.100 3.100-3.100h4V7H7c-2.760 0-5 2.240-5 5s2.240 5 5 5h4v-1.900H7c-1.710 0-3.100-1.390-3.100-3.100zM8 13h8v-2H8v2zm9-6h-4v1.900h4c1.710 0 3.100 1.390 3.100 3.100s-1.390 3.100-3.100 3.100h-4V17h4c2.760 0 5-2.240 5-5s-2.240-5-5-5z" fill="#444746"/></g>
<g transform="translate(822.09 51.84) scale(0.5825 0.5300)"><g transform="translate(24 0) scale(-1 1)"><path d="M22 4c0-1.100-.9-2-2-2H4c-1.100 0-2 .9-2 2v12c0 1.100.9 2 2 2h14l4 4V4zm-2 13.170L18.830 16H4V4h16v13.170z" fill="#444746"/></g><path d="M13 5h-2v4H7v2h4v4h2v-4h4V9h-4z" fill="#444746"/></g>
<g transform="translate(845.33 51.78) scale(0.5556 0.5389)"><path d="M9 17H7v-7h2v7zm4 0h-2V7h2v10zm4 0h-2v-4h2v4zm2 2H5V5h14v14zm0-16H5c-1.100 0-2 .9-2 2v14c0 1.100.9 2 2 2h14c1.100 0 2-.9 2-2V5c0-1.100-.9-2-2-2z" fill="#444746"/></g>
<g transform="translate(868.31 51.94) scale(0.5469 0.5406)"><path d="M7 6h10l-5.010 6.300L7 6zm-2.750-.39C6.270 8.200 10 13 10 13v6c0 .55.45 1 1 1h2c.55 0 1-.45 1-1v-6s3.720-4.800 5.740-7.390c.51-.66.040-1.610-.79-1.610H5.040c-.83 0-1.300.95-.79 1.610z" fill="#444746"/></g>
<g fill="none" stroke="#444746" stroke-width="1.2"><path d="M899 52.9 H891.8 Q890.6 52.9 890.6 54.1 V61"/><rect x="893.1" y="55.3" width="8.4" height="8.1" rx="1.1"/><path d="M893.1 58.2 H901.5 M893.1 60.8 H901.5 M895.9 58.2 V63.4 M898.7 58.2 V63.4" stroke-width="0.9"/></g>
<g transform="translate(921.25 51.77) scale(0.5417 0.5562)"><path d="M18 4H6v2l6.500 6L6 18v2h12v-3h-7l5-5-5-5h7z" fill="#444746"/></g>
<g transform="translate(111.71 8.28) scale(0.4950 0.5105)"><path d="M22 9.240l-7.190-.62L12 2 9.190 8.630 2 9.240l5.460 4.730L5.820 21 12 17.270 18.180 21l-1.630-7.030L22 9.240zM12 15.400l-3.760 2.270 1-4.280-3.320-2.880 4.380-.38L12 6.100l1.710 4.040 4.380.38-3.320 2.880 1 4.280L12 15.400z" fill="#444746" stroke="#444746" stroke-width="0.6"/></g>
<g fill="none" stroke="#444746" stroke-width="1.25" stroke-linejoin="round" stroke-linecap="round"><path d="M141.6 18.9 H137.8 Q133.9 18.9 135.8 15.6 L138.3 11.2 Q140.6 7.2 142.9 11.2 L144.7 14.3"/><path d="M140.6 12.6 L138.3 16.4 H141.9 Z" stroke-width="1"/><path d="M145 15.3 V19 M143.1 17.15 H146.9" stroke-width="1.3"/></g>
<g transform="translate(156.90 7.85) scale(0.5417 0.5375)"><path d="M19.350 10.040C18.670 6.590 15.640 4 12 4 9.110 4 6.600 5.640 5.350 8.040 2.340 8.360 0 10.910 0 14c0 3.310 2.690 6 6 6h13c2.760 0 5-2.240 5-5 0-2.640-2.050-4.780-4.650-4.960zM19 18H6c-2.210 0-4-1.790-4-4s1.790-4 4-4h.71C7.370 7.690 9.480 6 12 6c3.040 0 5.500 2.460 5.500 5.500v.5H19c1.660 0 3 1.340 3 3s-1.340 3-3 3zm-9-3.820l-2.090-2.090L6.500 13.500 10 17l6.010-6.010-1.410-1.410z" fill="#444746"/></g>
<g><path d="M-1 10.2 Q-1 8 1.2 8 H12 L17.6 13.6 V30.8 Q17.6 33 15.4 33 H1.2 Q-1 33 -1 30.8Z" fill="#0f9d58"/><path d="M12 8 L17.6 13.6 H13.4 Q12 13.6 12 12.2Z" fill="#087f45"/><path d="M2.8 18 H14.2 V26.3 H2.8Z M4.1 19.3 V21.5 H7.8 V19.3Z M9.1 19.3 V21.5 H12.9 V19.3Z M4.1 22.8 V25 H7.8 V22.8Z M9.1 22.8 V25 H12.9 V22.8Z" fill="#fff" fill-rule="evenodd"/></g>
</svg>
<span class="t" style="left:28.00px;top:7.00px;font-size:13px;color:#1f1f1f;letter-spacing:-0.216px;">Master Plan</span>
<span class="t" style="left:29.00px;top:25.57px;font-size:10.2px;color:#1f1f1f;letter-spacing:-0.355px;">File</span>
<span class="t" style="left:56.00px;top:25.57px;font-size:10.2px;color:#1f1f1f;letter-spacing:0.258px;">Modifica</span>
<span class="t" style="left:108.00px;top:25.57px;font-size:10.2px;color:#1f1f1f;letter-spacing:-0.069px;">Visualizza</span>
<span class="t" style="left:165.00px;top:25.57px;font-size:10.2px;color:#1f1f1f;letter-spacing:0.069px;">Inserisci</span>
<span class="t" style="left:215.00px;top:25.57px;font-size:10.2px;color:#1f1f1f;letter-spacing:0.009px;">Formato</span>
<span class="t" style="left:265.00px;top:25.57px;font-size:10.2px;color:#1f1f1f;letter-spacing:0.094px;">Dati</span>
<span class="t" style="left:295.50px;top:25.57px;font-size:10.2px;color:#1f1f1f;letter-spacing:0.155px;">Strumenti</span>
<span class="t" style="left:352.50px;top:25.57px;font-size:10.2px;color:#1f1f1f;letter-spacing:-0.052px;">Estensioni</span>
<span class="t" style="left:411.00px;top:25.57px;font-size:10.2px;color:#1f1f1f;letter-spacing:-0.037px;">Guida</span>
<span class="t" style="left:28.00px;top:53.37px;font-size:10.2px;color:#5f6368;letter-spacing:-0.121px;">Menu</span>
<span class="t" style="left:172.00px;top:54.79px;font-size:9.7px;color:#444746;letter-spacing:0.280px;-webkit-text-stroke:0.25px #444746;">100%</span>
<span class="t" style="left:233.60px;top:52.87px;font-size:9.6px;color:#444746;letter-spacing:0.856px;-webkit-text-stroke:0.3px #444746;">€</span>
<span class="t" style="left:255.70px;top:53.38px;font-size:9.0px;color:#444746;-webkit-text-stroke:0.3px #444746;">%</span>
<span class="t" style="left:276.50px;top:52.35px;font-size:8.8px;color:#444746;letter-spacing:-0.372px;-webkit-text-stroke:0.35px #444746;">.0</span>
<span class="t" style="left:299.00px;top:52.35px;font-size:8.8px;color:#444746;letter-spacing:-0.111px;-webkit-text-stroke:0.35px #444746;">.00</span>
<span class="t" style="left:322.00px;top:54.02px;font-size:8.6px;color:#444746;letter-spacing:-0.448px;">123</span>
<span class="t" style="left:354.80px;top:54.35px;font-size:10.1px;color:#444746;letter-spacing:-0.070px;-webkit-text-stroke:0.25px #444746;">Prede...</span>
<span class="t" style="left:448.70px;top:54.13px;font-size:9.3px;color:#1f1f1f;letter-spacing:-0.172px;">10</span>
<span class="t" style="left:-8.20px;top:83.33px;font-size:10px;color:#1f1f1f;">A1</span>
<span class="t" style="left:69.00px;top:83.97px;font-size:10.2px;color:#9aa0a6;font-style:italic;letter-spacing:0.820px;font-family:"Liberation Serif",serif;">fx</span>
<span class="t" style="left:30.85px;top:103.40px;font-size:7.8px;color:#50545a;">A</span>
<span class="t" style="left:92.27px;top:103.40px;font-size:7.8px;color:#50545a;">B</span>
<span class="t" style="left:172.43px;top:103.40px;font-size:7.8px;color:#50545a;">C</span>
<span class="t" style="left:244.43px;top:103.40px;font-size:7.8px;color:#50545a;">D</span>
<span class="t" style="left:316.65px;top:103.40px;font-size:7.8px;color:#50545a;">E</span>
<span class="t" style="left:388.87px;top:103.40px;font-size:7.8px;color:#50545a;">F</span>
<span class="t" style="left:460.21px;top:103.40px;font-size:7.8px;color:#50545a;">G</span>
<span class="t" style="left:532.43px;top:103.40px;font-size:7.8px;color:#50545a;">H</span>
<span class="t" style="left:606.16px;top:103.40px;font-size:7.8px;color:#50545a;">I</span>
<span class="t" style="left:677.30px;top:103.40px;font-size:7.8px;color:#50545a;">J</span>
<span class="t" style="left:748.65px;top:103.40px;font-size:7.8px;color:#50545a;">K</span>
<span class="t" style="left:821.08px;top:103.40px;font-size:7.8px;color:#50545a;">L</span>
<span class="t" style="left:892.00px;top:103.40px;font-size:7.8px;color:#50545a;">M</span>
<span class="t" style="left:964.43px;top:103.40px;font-size:7.8px;color:#50545a;">N</span>
<span class="t" style="left:-1.94px;top:118.87px;font-size:7.8px;color:#444746;">1</span>
<span class="t" style="left:-1.94px;top:138.40px;font-size:7.8px;color:#444746;">2</span>
<span class="t" style="left:-1.94px;top:157.97px;font-size:7.8px;color:#444746;">3</span>
<span class="t" style="left:-1.94px;top:173.20px;font-size:7.8px;color:#444746;">4</span>
<span class="t" style="left:-1.94px;top:188.20px;font-size:7.8px;color:#444746;">5</span>
<span class="t" style="left:-1.94px;top:203.20px;font-size:7.8px;color:#444746;">6</span>
<span class="t" style="left:-1.94px;top:218.20px;font-size:7.8px;color:#444746;">7</span>
<span class="t" style="left:-1.94px;top:233.20px;font-size:7.8px;color:#444746;">8</span>
<span class="t" style="left:-1.94px;top:248.20px;font-size:7.8px;color:#444746;">9</span>
<span class="t" style="left:-6.29px;top:263.20px;font-size:7.8px;color:#444746;">10</span>
<span class="t" style="left:-5.69px;top:278.20px;font-size:7.8px;color:#444746;">11</span>
<span class="t" style="left:-6.29px;top:293.20px;font-size:7.8px;color:#444746;">12</span>
<span class="t" style="left:-6.29px;top:308.20px;font-size:7.8px;color:#444746;">13</span>
<span class="t" style="left:-6.29px;top:323.20px;font-size:7.8px;color:#444746;">14</span>
<span class="t" style="left:-6.29px;top:338.20px;font-size:7.8px;color:#444746;">15</span>
<span class="t" style="left:-6.29px;top:353.20px;font-size:7.8px;color:#444746;">16</span>
<span class="t" style="left:-6.29px;top:368.20px;font-size:7.8px;color:#444746;">17</span>
<span class="t" style="left:-6.29px;top:383.20px;font-size:7.8px;color:#444746;">18</span>
<span class="t" style="left:-6.29px;top:398.20px;font-size:7.8px;color:#444746;">19</span>
<span class="t" style="left:-6.29px;top:413.20px;font-size:7.8px;color:#444746;">20</span>
<span class="t" style="left:-6.29px;top:428.20px;font-size:7.8px;color:#444746;">21</span>
<span class="t" style="left:-6.29px;top:448.70px;font-size:7.8px;color:#444746;">22</span>
<span class="t" style="left:-6.29px;top:469.20px;font-size:7.8px;color:#444746;">23</span>
<span class="t" style="left:-6.29px;top:484.20px;font-size:7.8px;color:#444746;">24</span>
<span class="t" style="left:-6.29px;top:499.20px;font-size:7.8px;color:#444746;">25</span>
<span class="t" style="left:-6.29px;top:514.20px;font-size:7.8px;color:#444746;">26</span>
<span class="t" style="left:-6.29px;top:529.20px;font-size:7.8px;color:#444746;">27</span>
<span class="t" style="left:26.00px;top:556.07px;font-size:10.2px;color:#0b57d0;letter-spacing:0.228px;-webkit-text-stroke:0.15px #0b57d0;">Aggiungi altre</span>
<span class="t" style="left:112.00px;top:555.77px;font-size:10.2px;color:#444746;letter-spacing:0.182px;">1000</span>
<span class="t" style="left:151.00px;top:557.67px;font-size:10.2px;color:#444746;letter-spacing:-0.011px;">righe in fondo</span>
<span class="t c" style="left:171.00px;top:135.74px;font-size:15.9px;color:#666;font-weight:bold;font-style:italic;letter-spacing:-0.016px;">Road map</span>
<span class="t c" style="left:253.00px;top:138.75px;font-size:12.35px;color:#666;font-weight:bold;font-style:italic;">percorso di affiancamento 12 settimane</span>
<span class="t c" style="left:143.70px;top:157.90px;font-size:10.4px;color:#000;font-weight:bold;font-style:italic;">Le 3 fasi</span>
<span class="t c" style="left:143.70px;top:173.16px;font-size:9.5px;color:#000;font-weight:bold;font-style:italic;">Fase del "perché"</span>
<span class="t c" style="left:358.30px;top:173.16px;font-size:9.5px;color:#000;font-weight:bold;font-style:italic;">Fase del "cosa"</span>
<span class="t c" style="left:502.00px;top:173.16px;font-size:9.5px;color:#000;font-weight:bold;font-style:italic;">Fase del "Come"</span>
<span class="t c" style="left:153.80px;top:188.56px;font-size:9.5px;color:#000;">Ruota della vita</span>
<span class="t c" style="left:159.30px;top:203.56px;font-size:9.5px;color:#000;">Valori</span>
<span class="t c" style="left:159.30px;top:218.56px;font-size:9.5px;color:#000;">Bisogni</span>
<span class="t c" style="left:159.30px;top:233.56px;font-size:9.5px;color:#000;">Punti di forza</span>
<span class="t c" style="left:159.30px;top:248.56px;font-size:9.5px;color:#000;">ruoli</span>
<span class="t c" style="left:373.90px;top:188.56px;font-size:9.5px;color:#000;">Visione (e prototipazione)</span>
<span class="t c" style="left:373.90px;top:203.56px;font-size:9.5px;color:#000;">obiettivi</span>
<span class="t c" style="left:373.90px;top:218.56px;font-size:9.5px;color:#000;">Mappa dell'anno</span>
<span class="t c" style="left:517.70px;top:188.56px;font-size:9.5px;color:#000;">Abitudini</span>
<span class="t c" style="left:517.70px;top:203.56px;font-size:9.5px;color:#000;">Pianificazione</span>
<span class="t c" style="left:502.00px;top:218.56px;font-size:9.5px;color:#000;">Make it</span>
<span class="t c" style="left:517.70px;top:233.56px;font-size:9.5px;color:#000;">to-do list</span>
<span class="t c" style="left:143.70px;top:278.56px;font-size:9.5px;color:#000;font-weight:bold;font-style:italic;">Lavora sulla tua quotidianità</span>
<span class="t c" style="left:143.70px;top:293.56px;font-size:9.5px;color:#000;font-weight:bold;">Dove sei</span>
<span class="t c" style="left:373.90px;top:293.56px;font-size:9.5px;color:#000;font-weight:bold;">Area lavoro</span>
<span class="t c" style="left:159.30px;top:308.56px;font-size:9.5px;color:#000;">Dove va il tempo</span>
<span class="t c" style="left:159.30px;top:323.56px;font-size:9.5px;color:#000;">Individua le tue trappole del tempo</span>
<span class="t c" style="left:159.30px;top:338.56px;font-size:9.5px;color:#000;">Dove vanno le Energie</span>
<span class="t c" style="left:159.30px;top:353.56px;font-size:9.5px;color:#000;">to-do list</span>
<span class="t c" style="left:159.30px;top:368.56px;font-size:9.5px;color:#000;">Pianificazione</span>
<span class="t c" style="left:373.90px;top:308.56px;font-size:9.5px;color:#000;">Area lavoro: task e priorità</span>
<span class="t c" style="left:373.90px;top:323.56px;font-size:9.5px;color:#000;">to-do list</span>
<span class="t c" style="left:371.60px;top:338.56px;font-size:9.5px;color:#000;">Crea il tuo piano anti-procrastinazione</span>
<span class="t c" style="left:65.57px;top:412.76px;font-size:9.5px;color:#000;font-weight:bold;">pre-percorso</span>
<span class="t c" style="left:149.11px;top:412.76px;font-size:9.5px;color:#000;font-weight:bold;">settimana 1</span>
<span class="t c" style="left:221.11px;top:412.76px;font-size:9.5px;color:#000;font-weight:bold;">settimana 2</span>
<span class="t c" style="left:293.11px;top:412.76px;font-size:9.5px;color:#000;font-weight:bold;">settimana 3</span>
<span class="t c" style="left:365.11px;top:412.76px;font-size:9.5px;color:#000;font-weight:bold;">settimana 4</span>
<span class="t c" style="left:437.11px;top:412.76px;font-size:9.5px;color:#000;font-weight:bold;">settimana 5</span>
<span class="t c" style="left:509.11px;top:412.76px;font-size:9.5px;color:#000;font-weight:bold;">settimana 6</span>
<span class="t c" style="left:581.11px;top:412.76px;font-size:9.5px;color:#000;font-weight:bold;">settimana 7</span>
<span class="t c" style="left:653.11px;top:412.76px;font-size:9.5px;color:#000;font-weight:bold;">settimana 8</span>
<span class="t c" style="left:725.11px;top:412.76px;font-size:9.5px;color:#000;font-weight:bold;">settimana 9</span>
<span class="t c" style="left:794.47px;top:412.76px;font-size:9.5px;color:#000;font-weight:bold;">settimana 10</span>
<span class="t c" style="left:866.73px;top:412.76px;font-size:9.5px;color:#000;font-weight:bold;">settimana 11</span>
<span class="t c" style="left:938.47px;top:412.76px;font-size:9.5px;color:#000;font-weight:bold;">settimana 12</span>
<span class="t c" style="left:969.00px;top:469.56px;font-size:9.5px;color:#000;">tbd</span>
</body></html>
